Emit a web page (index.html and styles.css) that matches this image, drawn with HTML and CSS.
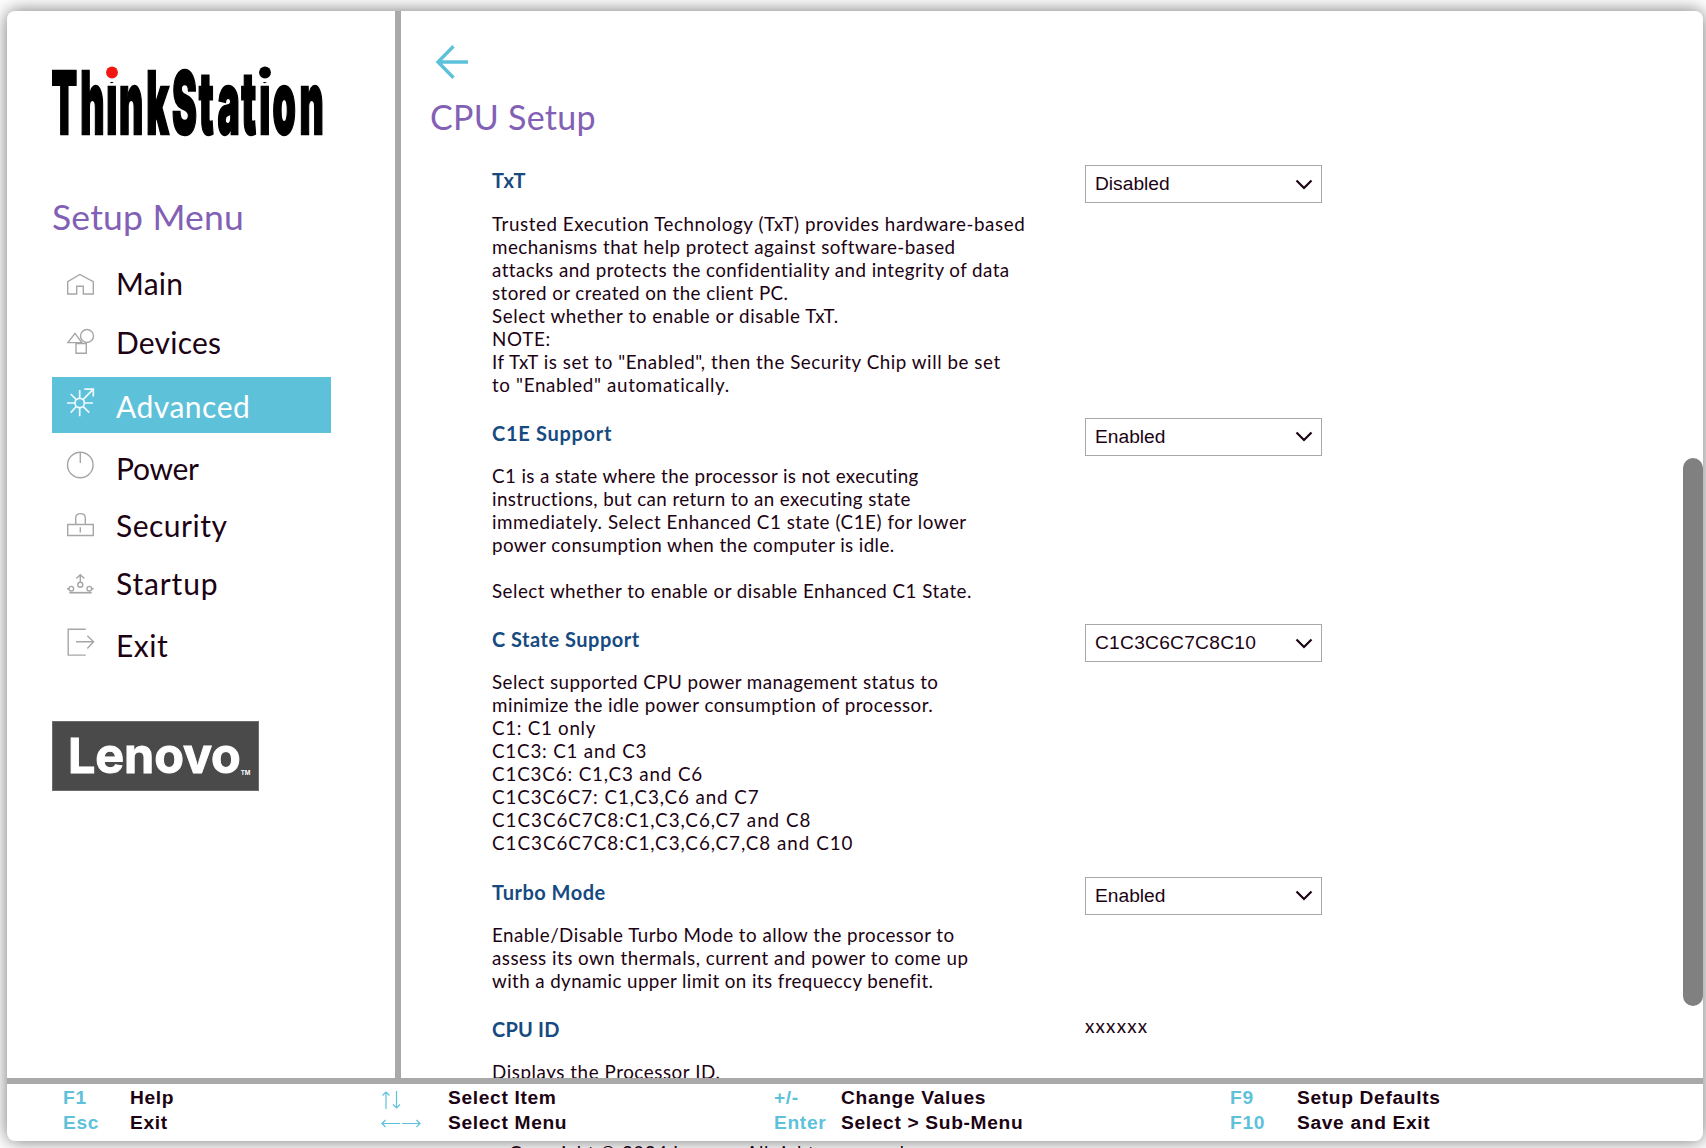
FILE: index.html
```
<!DOCTYPE html>
<html lang="en">
<head>
<meta charset="utf-8">
<title>CPU Setup</title>
<link rel="stylesheet" href="styles.css">
</head>
<body>
<div class="frame">
  <div class="upper">
    <aside class="sidebar">
      <svg class="brand" width="276" height="76" viewBox="0 0 276 76">
        <g class="brand-text" transform="scale(.43 1)">
          <text y="70" x="-1 65.5 126 156 219 279 341 385 440 482 513 575.5">ThinkStation</text>
        </g>
        <rect x="52.5" y="0" width="15" height="18" fill="#fff"/>
        <rect x="205.5" y="0" width="15" height="18" fill="#fff"/>
        <circle cx="60" cy="8.5" r="5.9" fill="#f01810"/>
        <circle cx="213" cy="8.5" r="5.9"/>
      </svg>
      <h2 class="menu-title">Setup Menu</h2>
      <nav class="menu">
        <a class="item main"><svg class="ico" viewBox="0 0 28 30"><path d="M.7 26V13.7L12.8 6.5l13.5 7.2V26h-10v-7.7H9.7V26z"/></svg><span class="k2">Main</span></a>
        <a class="item devices"><svg class="ico" viewBox="0 0 28 30"><path d="M8 6.3 14.8 15.6H.9zM9 16.5h10.3v9.7H9z"/><circle cx="20" cy="9" r="6.5"/></svg><span class="k2">Devices</span></a>
        <a class="item advanced"><svg class="ico" viewBox="0 0 28 30"><circle cx="12.7" cy="13" r="4.7"/><path d="M12.7 0v8.3M12.7 17.7v8.6M0 13h8M17.4 13H26M3.7 4l5.7 5.7M16 16.3l6.3 6.4M3.7 22.7l5.7-6.4M16 9.7 26.3-.8M17.3-.8h9v7.4"/></svg><span class="k5">Advanced</span></a>
        <a class="item power"><svg class="ico" viewBox="0 0 28 30"><circle cx="13.3" cy="13" r="12.8"/><path d="M13.3 0v11"/></svg><span class="kn">Power</span></a>
        <a class="item security"><svg class="ico" viewBox="0 0 28 30"><path d="M.7 15.5h25.6v11H.7zM8.7 15.5V9q0-4.4 4.8-4.4T18.3 9v6.5M13.3 18.3v5.2"/></svg><span class="k5">Security</span></a>
        <a class="item startup"><svg class="ico" viewBox="0 0 28 30"><path d="M2.3 25.7h22.4" stroke-width="1.7"/><circle cx="4.3" cy="21.7" r="2.3"/><circle cx="13.3" cy="17.8" r="2.5"/><circle cx="22.3" cy="21.7" r="2.3"/><path d="M0 21.7h2M24.6 21.7h2M13.3 15.3V8M9.3 11.6l4-3.8 4 3.8"/></svg><span class="k9">Startup</span></a>
        <a class="item exit"><svg class="ico" viewBox="0 0 28 30"><path d="M18.7.3H1.2v25.8h17.5M9 12.8h17.5M20.3 6.8l6.3 6-6.3 6.6"/></svg><span class="k5">Exit</span></a>
      </nav>
      <div class="lenovo"><span class="word">Lenovo</span><span class="tm">TM</span></div>
    </aside>
    <main class="content">
      <svg class="back" width="36" height="34" viewBox="0 0 36 34"><path d="M18.500 1.200 3 17l15.500 15.800M2.500 17H33"/></svg>
      <h1 class="title">CPU Setup</h1>
      <section class="row">
        <div class="info"><h3 class="ktxt">TxT</h3>
          <p><span class="k56">Trusted Execution Technology (TxT) provides hardware-based</span><span>mechanisms that help protect against software-based</span><span class="k43">attacks and protects the confidentiality and integrity of data</span><span class="k43">stored or created on the client PC.</span><span class="k56">Select whether to enable or disable TxT.</span><span class="k75">NOTE:</span><span class="k54">If TxT is set to "Enabled", then the Security Chip will be set</span><span class="k65">to "Enabled" automatically.</span></p></div>
        <div class="select"><span>Disabled</span><svg class="chev" viewBox="0 0 18 11"><path d="M1.500 1.500 9 9l7.500-7.500"/></svg></div>
      </section>
      <section class="row">
        <div class="info"><h3 class="kc1e">C1E Support</h3>
          <p><span class="k41">C1 is a state where the processor is not executing</span><span class="k41">instructions, but can return to an executing state</span><span class="k54">immediately. Select Enhanced C1 state (C1E) for lower</span><span class="k41">power consumption when the computer is idle.</span><span>&nbsp;</span><span>Select whether to enable or disable Enhanced C1 State.</span></p></div>
        <div class="select"><span>Enabled</span><svg class="chev" viewBox="0 0 18 11"><path d="M1.500 1.500 9 9l7.500-7.500"/></svg></div>
      </section>
      <section class="row">
        <div class="info"><h3>C State Support</h3>
          <p><span class="k43">Select supported CPU power management status to</span><span>minimize the idle power consumption of processor.</span><span class="k75">C1: C1 only</span><span class="k80">C1C3: C1 and C3</span><span class="k88">C1C3C6: C1,C3 and C6</span><span class="k94">C1C3C6C7: C1,C3,C6 and C7</span><span class="k100">C1C3C6C7C8:C1,C3,C6,C7 and C8</span><span class="k100">C1C3C6C7C8:C1,C3,C6,C7,C8 and C10</span></p></div>
        <div class="select wide"><span>C1C3C6C7C8C10</span><svg class="chev" viewBox="0 0 18 11"><path d="M1.500 1.500 9 9l7.500-7.500"/></svg></div>
      </section>
      <section class="row">
        <div class="info"><h3>Turbo Mode</h3>
          <p><span>Enable/Disable Turbo Mode to allow the processor to</span><span>assess its own thermals, current and power to come up</span><span class="k41">with a dynamic upper limit on its frequeccy benefit.</span></p></div>
        <div class="select"><span>Enabled</span><svg class="chev" viewBox="0 0 18 11"><path d="M1.500 1.500 9 9l7.500-7.500"/></svg></div>
      </section>
      <section class="row">
        <div class="info"><h3 class="kid">CPU ID</h3>
          <p><span class="k56">Displays the Processor ID.</span></p></div>
        <div class="value">xxxxxx</div>
      </section>
    </main>
    <div class="scroll"><div class="thumb"></div></div>
  </div>
  <footer class="keys">
    <dl><dt>F1</dt><dd>Help</dd><dt>Esc</dt><dd>Exit</dd></dl>
    <dl>
      <dt><svg width="20" height="20" viewBox="0 0 20 20"><path d="M5 19V2M1.500 5.500 5 2l3.500 3.500M15.500 1v17M12 14.500l3.500 3.500 3.500-3.500"/></svg></dt><dd>Select Item</dd>
      <dt><svg width="42" height="20" viewBox="0 0 42 20"><path d="M1 8.500h18M4.500 5 1 8.500 4.500 12M21 8.500h18M35.500 5l3.500 3.500-3.500 3.500"/></svg></dt><dd>Select Menu</dd>
    </dl>
    <dl><dt>+/-</dt><dd>Change Values</dd><dt>Enter</dt><dd>Select &gt; Sub-Menu</dd></dl>
    <dl><dt>F9</dt><dd>Setup Defaults</dd><dt>F10</dt><dd>Save and Exit</dd></dl>
  </footer>
</div>
<div class="copyright">Copyright © 2024 Lenovo. All rights reserved</div>
</body>
</html>
```
FILE: styles.css
```
* { box-sizing: border-box; }
body {
  margin: 0;
  height: 1148px;
  padding: 11px 3px 0 7px;
  overflow: hidden;
  background: #fff;
  color: #1c0313;
  font-family: Lato, "Open Sans", sans-serif;
}
h1, h2, h3, p, dl, dd { margin: 0; }
.frame {
  height: 1130px;
  border-radius: 8px;
  background: #fff;
  box-shadow: 0 0 18px rgba(0, 0, 0, .55);
  overflow: hidden;
}
.upper { display: flex; height: 1067px; }

.sidebar {
  width: 394px;
  flex: none;
  border-right: 6px solid #a9a9a9;
  padding: 53px 0 0 45px;
}
.brand { display: block; overflow: visible; }
.brand-text {
  font: 900 87px Inter, sans-serif;
  stroke: #000;
  stroke-width: 2.400px;
}
.menu-title {
  margin-top: 55px;
  height: 64px;
  font-size: 35.500px;
  font-weight: 400;
  line-height: 44px;
  letter-spacing: .2px;
  color: #8260b5;
}
.menu { display: flex; flex-direction: column; width: 279px; }
.item {
  display: flex;
  align-items: center;
  padding-left: 15px;
  gap: 21px;
  font-size: 30px;
  line-height: 36px;
}
.item span { padding-top: 1px; }
.ico {
  width: 28px;
  height: 30px;
  overflow: visible;
  fill: none;
  stroke: #a6a6a6;
  stroke-width: 1.400;
}
.main { height: 48px; }
.main span, .devices span { padding-top: 0; }
.devices { height: 70px; }
.advanced { height: 56px; background: #5ec1da; color: #fff; }
.advanced .ico { stroke: #eefaff; stroke-width: 1.700; }
.power { height: 68px; }
.security { height: 46px; }
.startup { height: 70px; }
.exit { height: 54px; }
.k2 { letter-spacing: .22px; }
.k5 { letter-spacing: .5px; }
.k9 { letter-spacing: .85px; }
.kn { letter-spacing: -.28px; }

.lenovo {
  display: flex;
  align-items: flex-end;
  width: 207px;
  height: 70px;
  margin-top: 50px;
  padding-left: 15px;
  background: #4a4a4a;
  border: 1px solid #6c6c6c;
  color: #fff;
  font-family: Inter, sans-serif;
  font-weight: 700;
}
.word { font-size: 48.500px; line-height: 69px; letter-spacing: -.1px; -webkit-text-stroke: 1px #fff; }
.tm { font-size: 6px; line-height: 8px; margin: 0 0 13px 0; }

.content { flex: 1; overflow: hidden; padding: 34px 0 0 29px; }
.back {
  display: block;
  margin-left: 5px;
  fill: none;
  stroke: #5ec1da;
  stroke-width: 3.400;
}
.title {
  margin-top: 16px;
  height: 70px;
  font-size: 34px;
  font-weight: 400;
  line-height: 44px;
  letter-spacing: .3px;
  color: #8260b5;
}
.row { display: flex; padding: 0 0 21.500px 62px; }
.row + .row p { margin: -.7px 0 .7px; }
.info { width: 593px; flex: none; }
.info h3 {
  padding-top: 3px;
  height: 47px;
  font-size: 20px;
  font-weight: 700;
  line-height: 24px;
  letter-spacing: .5px;
  color: #164a80;
}
.info .ktxt { letter-spacing: 1.300px; }
.info .kc1e { letter-spacing: .7px; }
.info .kid { letter-spacing: .2px; }
.info p span {
  display: block;
  height: 23px;
  font-size: 18.800px;
  line-height: 23px;
  letter-spacing: .48px;
  white-space: nowrap;
}
.info p .k41 { letter-spacing: .39px; }
.info p .k43 { letter-spacing: .43px; }
.info p .k54 { letter-spacing: .54px; }
.info p .k56 { letter-spacing: .56px; }
.info p .k65 { letter-spacing: .65px; }
.info p .k75 { letter-spacing: .7px; }
.info p .k80 { letter-spacing: .8px; }
.info p .k88 { letter-spacing: .86px; }
.info p .k94 { letter-spacing: .92px; }
.info p .k100 { letter-spacing: 1px; }

.select {
  display: flex;
  align-items: center;
  justify-content: space-between;
  width: 237px;
  height: 38px;
  padding: 0 8px 0 9px;
  border: 1px solid #a9a9a9;
  font: 19.200px "Liberation Sans", Arial, sans-serif;
}
.wide { letter-spacing: .25px; }
.chev { width: 18px; height: 11px; fill: none; stroke: #1c0313; stroke-width: 2.200; }
.value { font-size: 18.800px; line-height: 23px; letter-spacing: 1.200px; }

.scroll { width: 20px; padding-top: 447px; flex: none; }
.thumb { height: 548px; border-radius: 10px; background: #808080; }

.keys {
  display: grid;
  grid-template-columns: 318px 393px 456px 1fr;
  height: 63px;
  border-top: 6px solid #a9a9a9;
  padding: 1px 0 0 56px;
  font: bold 19.200px/25px "Liberation Sans", Arial, sans-serif;
  letter-spacing: .66px;
}
.keys dl { display: grid; grid-template-columns: 67px 1fr; grid-template-rows: 25px 25px; }
.keys dt { color: #5ec1da; }
.keys svg { display: block; margin-top: 5px; fill: none; stroke: #5ec1da; stroke-width: 1.200; }
.copyright {
  margin-left: 502px;
  position: relative;
  font-size: 18.800px;
  line-height: 23px;
  letter-spacing: .54px;
  white-space: nowrap;
}
```
